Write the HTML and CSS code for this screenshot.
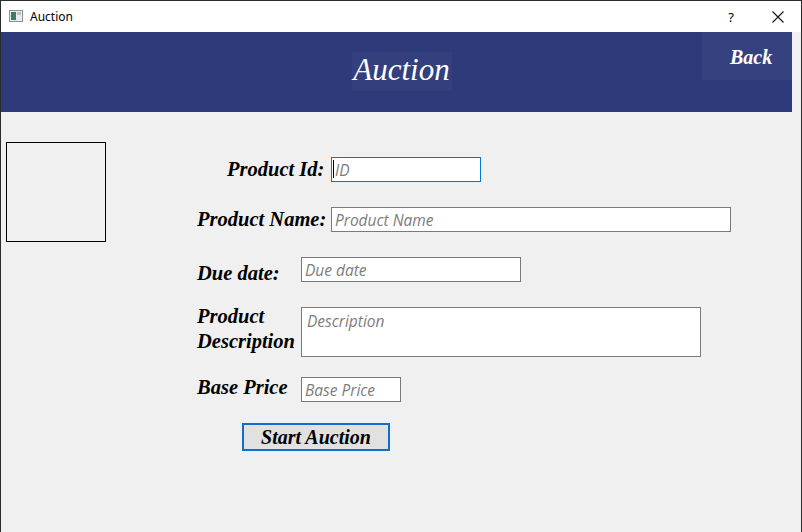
FILE: index.html
```html
<!DOCTYPE html>
<html>
<head>
<meta charset="utf-8">
<link rel="stylesheet" href="styles.css">
</head>
<body>
<div class="window">
  <div class="titlebar">
    <svg class="appicon" width="14" height="12" viewBox="0 0 14 12">
      <rect x="0.5" y="0.5" width="13" height="11" fill="#e8ecec" stroke="#8a9494"/>
      <rect x="2" y="2" width="5" height="8" fill="#3f7a68"/>
      <rect x="8" y="2" width="4" height="3" fill="#b9c3c3"/>
    </svg>
    <span class="wtitle">Auction</span>
    <span class="spacer"></span>
    <span class="help">?</span>
    <svg class="close" width="12" height="12" viewBox="0 0 12 12">
      <path d="M0.5 0.5 L11.5 11.5 M11.5 0.5 L0.5 11.5" stroke="#111" stroke-width="1.1"/>
    </svg>
  </div>
  <div class="header">
    <div class="htitle-wrap"><span class="htitle">Auction</span></div>
    <div class="back">Back</div>
  </div>
  <div class="main">
    <div class="photo"></div>
    <div class="form">
      <div class="row r1">
        <label class="lbl w1 indent">Product Id:</label>
        <div class="field">
          <input class="inp focus" style="width:150px" placeholder="ID">
          <span class="caret"></span>
        </div>
      </div>
      <div class="row r2">
        <label class="lbl w1">Product Name:</label>
        <input class="inp" style="width:400px" placeholder="Product Name">
      </div>
      <div class="row r3">
        <label class="lbl w2 low">Due date:</label>
        <input class="inp" style="width:220px" placeholder="Due date">
      </div>
      <div class="row r4">
        <label class="lbl w2 two">Product<br>Description</label>
        <textarea class="inp ta" style="width:400px" placeholder="Description"></textarea>
      </div>
      <div class="row r5">
        <label class="lbl w2">Base Price</label>
        <input class="inp" style="width:100px" placeholder="Base Price">
      </div>
      <div class="btnrow">
        <button class="start">Start Auction</button>
      </div>
    </div>
  </div>
</div>
</body>
</html>
```

FILE: styles.css
```css
* { box-sizing: border-box; }
html, body { margin: 0; padding: 0; background: #f0f0f0; }
.window {
  width: 802px; height: 532px;
  border: 1px solid #2b2b2b; border-bottom: none;
  background: #f0f0f0;
  overflow: hidden;
}
.titlebar {
  height: 31px; background: #fff;
  display: flex; align-items: center;
  padding-left: 8px;
  font-family: "Noto Sans", "Open Sans", sans-serif;
  font-size: 12px; color: #000;
}
.appicon { margin-top: -2px; }
.wtitle { margin-left: 7px; }
.spacer { flex: 1; }
.help { font-size: 13px; margin-right: 38px; }
.close { margin-right: 17px; }

.header {
  height: 80px; margin-right: 9px;
  background: #2f3a7a;
  display: flex;
}
.htitle-wrap {
  flex: 1; display: flex; justify-content: center; align-items: flex-start;
  padding-top: 20px; padding-left: 100px;
}
.htitle {
  display: block; width: 100px; height: 39px; text-align: center;
  background: #343f7e;
  font-family: "Liberation Serif", serif; font-style: italic;
  font-size: 31px; line-height: 36px; color: #fff;
}
.back {
  width: 90px; height: 48px;
  background: #36417f;
  font-family: "Liberation Serif", serif; font-style: italic; font-weight: bold;
  font-size: 20px; color: #fff;
  padding-left: 28px; padding-top: 14px;
}

.main { display: flex; }
.photo {
  width: 100px; height: 100px;
  border: 1px solid #000;
  margin-left: 5px; margin-top: 30px;
}
.form { margin-left: 91px; padding-top: 45px; }
.row { display: flex; align-items: flex-start; height: 25px; }
.r2 { margin-top: 25px; }
.r3 { margin-top: 25px; }
.r4 { margin-top: 25px; height: 50px; }
.r5 { margin-top: 20px; }
.lbl {
  font-family: "Liberation Serif", serif; font-style: italic; font-weight: bold;
  font-size: 20.5px; line-height: 25px; color: #000;
  white-space: nowrap;
}
.w1 { width: 134px; }
.w2 { width: 104px; }
.indent { padding-left: 30px; }
.low { padding-top: 4px; }
.two { line-height: 25px; margin-top: -3px; }
.r5 .lbl { margin-top: -2px; }
.field { position: relative; }
.inp {
  height: 25px; margin: 0;
  border: 1px solid #7a7a7a; background: #fff;
  font-family: "Open Sans", "Noto Sans", sans-serif; font-style: italic;
  font-size: 15.5px; padding: 0 3px; color: #000;
  outline: none; display: block;
}
.inp::placeholder { color: #7d7d7d; opacity: 1; }
.focus { border-color: #0078d7; }
.ta { height: 50px; resize: none; padding: 2px 5px; overflow: hidden; }
.caret {
  position: absolute; left: 2px; top: 3px;
  width: 1px; height: 18px; background: #000;
}
.btnrow { margin-top: 21px; padding-left: 45px; }
.start {
  width: 148px; height: 28px;
  background: #e1e1e1;
  border: 2px solid #0f6fc6;
  font-family: "Liberation Serif", serif; font-style: italic; font-weight: bold;
  font-size: 20px; color: #000; padding: 0;
  line-height: 22px;
}
```
